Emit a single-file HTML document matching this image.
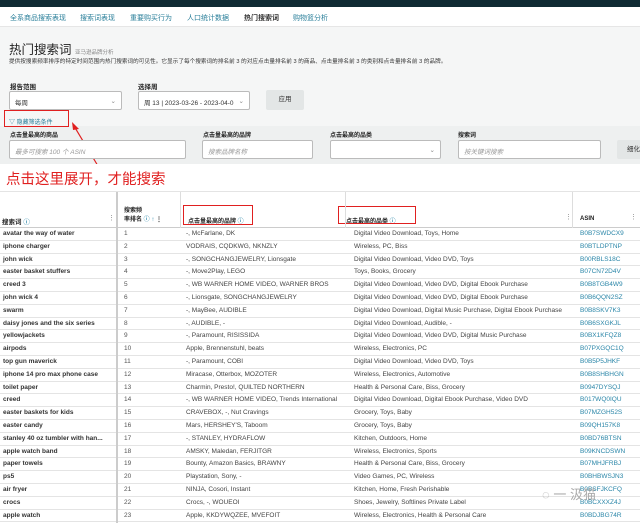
<!DOCTYPE html>
<html><head><meta charset="utf-8"><style>
*{margin:0;padding:0;box-sizing:border-box}
body{width:640px;height:523px;overflow:hidden;background:#fff;font-family:"Liberation Sans","Noto Sans CJK SC",sans-serif;color:#222;position:relative;font-size:7px}
.a{position:absolute;white-space:nowrap}
.top{left:0;top:0;width:640px;height:7px;background:#0f2a33}
.nav{left:0;top:7px;width:640px;height:20px;background:#fff;border-bottom:1px solid #e6e6e6}
.nav span{position:absolute;top:6px;color:#2a7f9a;font-size:7px}
.hdr{left:0;top:27px;width:640px;height:163px;background:#f5f6f6}
.box{position:absolute;background:#fff;border:1px solid #bbb;border-radius:2px;height:19px;font-size:6.5px;color:#333;padding:5px 5px;overflow:hidden}
.ph{color:#999;font-style:italic}
.red{position:absolute;border:1.5px solid #e02020}
.row{position:absolute;left:0;width:640px;height:12.8px;border-bottom:1px solid #e4e4e4;font-size:6.5px}
.row span{position:absolute;top:2px}
.c1{left:3px;font-weight:bold;color:#333}
.c2{left:124px;color:#555}
.c3{left:186px;color:#444}
.c4{left:354px;color:#444}
.c5{left:580px;color:#2a86a8}
</style></head><body>
<div class="a top"></div>
<div class="a nav">
<span style="left:10px">全系商品搜索表现</span><span style="left:80px">搜索词表现</span><span style="left:130px">重要购买行为</span><span style="left:187px">人口统计数据</span><span style="left:244px;font-weight:bold;color:#333">热门搜索词</span><span style="left:293px">购物篮分析</span>
</div>
<div class="a hdr"></div>
<div class="a" style="left:9px;top:39px;font-size:12.5px;color:#222">热门搜索词 <span style="font-size:5.5px;color:#888">亚马逊品牌分析</span></div>
<div class="a" style="left:9px;top:57px;font-size:5.6px;color:#333;letter-spacing:0.05px">提供按搜索频率排序的特定时间范围内热门搜索词的可见性。它显示了每个搜索词的排名前 3 的对应点击量排名前 3 的商品、点击量排名前 3 的类别和点击量排名前 3 的品牌。</div>
<div class="a" style="left:10px;top:81px;font-size:6.5px;font-weight:bold">报告范围</div>
<div class="a" style="left:138px;top:81px;font-size:6.5px;font-weight:bold">选择周</div>
<div class="box" style="left:9px;top:91px;width:113px">每周<span style="float:right;color:#888">⌄</span></div>
<div class="box" style="left:138px;top:91px;width:112px">周 13 | 2023-03-26 - 2023-04-0<span style="float:right;color:#888">⌄</span></div>
<div class="a" style="left:266px;top:90px;width:38px;height:20px;background:#e3e6e6;border-radius:2px;font-size:6.5px;text-align:center;line-height:20px;color:#333">应用</div>
<div class="a" style="left:0;top:126px;width:640px;height:38px;background:#eef0f0"></div>
<div class="a" style="left:9px;top:117px;font-size:6px;color:#2a7f9a">▽ 隐藏筛选条件</div>
<div class="red" style="left:4px;top:110px;width:65px;height:17px"></div>
<svg class="a" style="left:70px;top:122px" width="30" height="46"><line x1="28" y1="44" x2="4" y2="4" stroke="#e02020" stroke-width="1.2"/><polygon points="2,0 9,7 3,8" fill="#e02020"/></svg>
<div class="a" style="left:10px;top:130px;font-size:6px;font-weight:bold">点击量最高的商品</div>
<div class="a" style="left:203px;top:130px;font-size:6px;font-weight:bold">点击量最高的品牌</div>
<div class="a" style="left:330px;top:130px;font-size:6px;font-weight:bold">点击最高的品类</div>
<div class="a" style="left:458px;top:130px;font-size:6px;font-weight:bold">搜索词</div>
<div class="box ph" style="left:9px;top:140px;width:177px">最多可搜索 100 个 ASIN</div>
<div class="box ph" style="left:202px;top:140px;width:111px">搜索品牌名称</div>
<div class="box" style="left:330px;top:140px;width:111px"><span style="float:right;color:#888">⌄</span></div>
<div class="box ph" style="left:458px;top:140px;width:143px">按关键词搜索</div>
<div class="a" style="left:617px;top:140px;width:30px;height:19px;background:#e3e6e6;border-radius:2px;font-size:6.5px;line-height:19px;padding-left:10px;color:#333">细化</div>
<div class="a" style="left:0;top:164px;width:640px;height:26px;background:#fff"></div>
<div class="a" style="left:6px;top:168px;font-size:14.5px;color:#e02020">点击这里展开，才能搜索</div>
<div class="a" style="left:0;top:191px;width:640px;height:37px;border-top:1px solid #e4e4e4;border-bottom:1px solid #ccc"></div>
<div class="a" style="left:2px;top:216px;font-size:6.5px;font-weight:bold">搜索词 <span style="color:#2a86a8">ⓘ</span></div>
<div class="a" style="left:108px;top:214px;color:#888">⋮</div>
<div class="a" style="left:124px;top:207px;font-size:6px;font-weight:bold;line-height:9px">搜索频<br>率排名 <span style="color:#2a86a8">ⓘ ↑</span> ⋮</div>
<div class="a" style="left:180px;top:192px;width:1px;height:36px;background:#ddd"></div>
<div class="a" style="left:188px;top:216px;font-size:6px;font-weight:bold">点击量最高的品牌 <span style="color:#2a86a8">ⓘ</span></div>
<div class="red" style="left:183px;top:205px;width:70px;height:20px"></div>
<div class="a" style="left:346px;top:216px;font-size:6px;font-weight:bold">点击最高的品类 <span style="color:#2a86a8">ⓘ</span></div>
<div class="red" style="left:338px;top:206px;width:78px;height:18px"></div>
<div class="a" style="left:345px;top:192px;width:1px;height:36px;background:#ddd"></div>
<div class="a" style="left:565px;top:213px;color:#888">⋮</div>
<div class="a" style="left:572px;top:192px;width:1px;height:36px;background:#ddd"></div>
<div class="a" style="left:580px;top:216px;font-size:6px;font-weight:bold">ASIN</div>
<div class="a" style="left:630px;top:213px;color:#888">⋮</div>
<div class="a" style="left:0;top:228px;width:640px">
<div class="row" style="top:0"><span class="c1">avatar the way of water</span><span class="c2">1</span><span class="c3">-, McFarlane, DK</span><span class="c4">Digital Video Download, Toys, Home</span><span class="c5">B0B7SWDCX9</span></div>
<div class="row" style="top:12.8px"><span class="c1">iphone charger</span><span class="c2">2</span><span class="c3">VODRAIS, CQDKWG, NKNZLY</span><span class="c4">Wireless, PC, Biss</span><span class="c5">B0BTLDPTNP</span></div>
<div class="row" style="top:25.6px"><span class="c1">john wick</span><span class="c2">3</span><span class="c3">-, SONGCHANGJEWELRY, Lionsgate</span><span class="c4">Digital Video Download, Video DVD, Toys</span><span class="c5">B00RBLS18C</span></div>
<div class="row" style="top:38.4px"><span class="c1">easter basket stuffers</span><span class="c2">4</span><span class="c3">-, Move2Play, LEGO</span><span class="c4">Toys, Books, Grocery</span><span class="c5">B07CN72D4V</span></div>
<div class="row" style="top:51.2px"><span class="c1">creed 3</span><span class="c2">5</span><span class="c3">-, WB WARNER HOME VIDEO, WARNER BROS</span><span class="c4">Digital Video Download, Video DVD, Digital Ebook Purchase</span><span class="c5">B0B8TGB4W9</span></div>
<div class="row" style="top:64px"><span class="c1">john wick 4</span><span class="c2">6</span><span class="c3">-, Lionsgate, SONGCHANGJEWELRY</span><span class="c4">Digital Video Download, Video DVD, Digital Ebook Purchase</span><span class="c5">B0B6QQN2SZ</span></div>
<div class="row" style="top:76.8px"><span class="c1">swarm</span><span class="c2">7</span><span class="c3">-, MayBee, AUDIBLE</span><span class="c4">Digital Video Download, Digital Music Purchase, Digital Ebook Purchase</span><span class="c5">B0B8SKV7K3</span></div>
<div class="row" style="top:89.6px"><span class="c1">daisy jones and the six series</span><span class="c2">8</span><span class="c3">-, AUDIBLE, -</span><span class="c4">Digital Video Download, Audible, -</span><span class="c5">B0B6SXGKJL</span></div>
<div class="row" style="top:102.4px"><span class="c1">yellowjackets</span><span class="c2">9</span><span class="c3">-, Paramount, RISISSIDA</span><span class="c4">Digital Video Download, Video DVD, Digital Music Purchase</span><span class="c5">B0BX1KFQZ8</span></div>
<div class="row" style="top:115.2px"><span class="c1">airpods</span><span class="c2">10</span><span class="c3">Apple, Brennenstuhl, beats</span><span class="c4">Wireless, Electronics, PC</span><span class="c5">B07PXGQC1Q</span></div>
<div class="row" style="top:128px"><span class="c1">top gun maverick</span><span class="c2">11</span><span class="c3">-, Paramount, COBI</span><span class="c4">Digital Video Download, Video DVD, Toys</span><span class="c5">B0B5P5JHKF</span></div>
<div class="row" style="top:140.8px"><span class="c1">iphone 14 pro max phone case</span><span class="c2">12</span><span class="c3">Miracase, Otterbox, MOZOTER</span><span class="c4">Wireless, Electronics, Automotive</span><span class="c5">B0B8SHBHGN</span></div>
<div class="row" style="top:153.6px"><span class="c1">toilet paper</span><span class="c2">13</span><span class="c3">Charmin, Presto!, QUILTED NORTHERN</span><span class="c4">Health &amp; Personal Care, Biss, Grocery</span><span class="c5">B0947DYSQJ</span></div>
<div class="row" style="top:166.4px"><span class="c1">creed</span><span class="c2">14</span><span class="c3">-, WB WARNER HOME VIDEO, Trends International</span><span class="c4">Digital Video Download, Digital Ebook Purchase, Video DVD</span><span class="c5">B017WQ0IQU</span></div>
<div class="row" style="top:179.2px"><span class="c1">easter baskets for kids</span><span class="c2">15</span><span class="c3">CRAVEBOX, -, Nut Cravings</span><span class="c4">Grocery, Toys, Baby</span><span class="c5">B07MZGH52S</span></div>
<div class="row" style="top:192px"><span class="c1">easter candy</span><span class="c2">16</span><span class="c3">Mars, HERSHEY'S, Taboom</span><span class="c4">Grocery, Toys, Baby</span><span class="c5">B09QH157K8</span></div>
<div class="row" style="top:204.8px"><span class="c1">stanley 40 oz tumbler with han...</span><span class="c2">17</span><span class="c3">-, STANLEY, HYDRAFLOW</span><span class="c4">Kitchen, Outdoors, Home</span><span class="c5">B0BD76BTSN</span></div>
<div class="row" style="top:217.6px"><span class="c1">apple watch band</span><span class="c2">18</span><span class="c3">AMSKY, Maledan, FERJITGR</span><span class="c4">Wireless, Electronics, Sports</span><span class="c5">B09KNCDSWN</span></div>
<div class="row" style="top:230.4px"><span class="c1">paper towels</span><span class="c2">19</span><span class="c3">Bounty, Amazon Basics, BRAWNY</span><span class="c4">Health &amp; Personal Care, Biss, Grocery</span><span class="c5">B07MHJFRBJ</span></div>
<div class="row" style="top:243.2px"><span class="c1">ps5</span><span class="c2">20</span><span class="c3">Playstation, Sony, -</span><span class="c4">Video Games, PC, Wireless</span><span class="c5">B0BHBWSJN3</span></div>
<div class="row" style="top:256px"><span class="c1">air fryer</span><span class="c2">21</span><span class="c3">NINJA, Cosori, Instant</span><span class="c4">Kitchen, Home, Fresh Perishable</span><span class="c5">B0BSFJKCFQ</span></div>
<div class="row" style="top:268.8px"><span class="c1">crocs</span><span class="c2">22</span><span class="c3">Crocs, -, WOUEOI</span><span class="c4">Shoes, Jewelry, Softlines Private Label</span><span class="c5">B0BCXXXZ4J</span></div>
<div class="row" style="top:281.6px"><span class="c1">apple watch</span><span class="c2">23</span><span class="c3">Apple, KKDYWQZEE, MVEFOIT</span><span class="c4">Wireless, Electronics, Health &amp; Personal Care</span><span class="c5">B0BDJBG74R</span></div>
</div>
<div class="a" style="left:116px;top:192px;width:1.5px;height:331px;background:#ccc"></div>
<div class="a" style="left:542px;top:484px;font-size:13px;color:#aaa">◌ 一 汲猫</div>
</body></html>
